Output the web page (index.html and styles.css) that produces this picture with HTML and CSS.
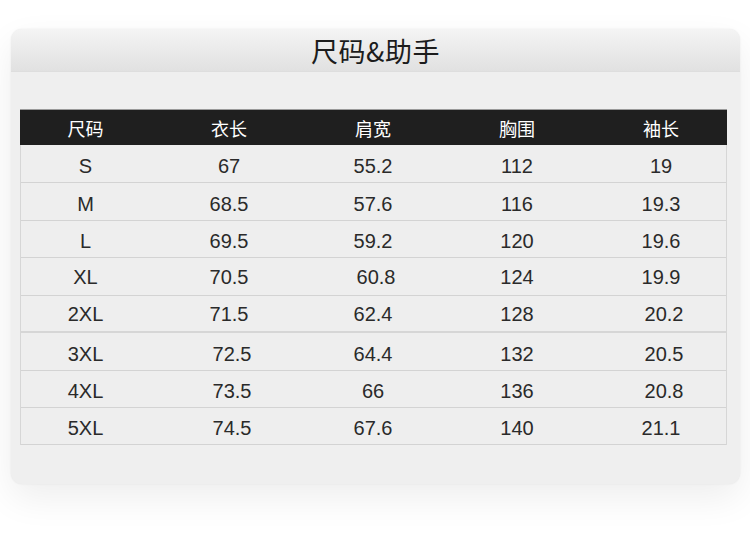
FILE: index.html
```html
<!DOCTYPE html>
<html lang="zh">
<head>
<meta charset="utf-8">
<link rel="stylesheet" href="styles.css">
</head>
<body>
<div class="card">
  <div class="card-head">尺码&amp;助手</div>
  <div class="card-body">
    <div class="table">
      <div class="row head"><span>尺码</span><span>衣长</span><span>肩宽</span><span>胸围</span><span>袖长</span></div>
      <div class="row r38"><span>S</span><span>67</span><span>55.2</span><span>112</span><span>19</span></div>
      <div class="row r38"><span>M</span><span>68.5</span><span>57.6</span><span>116</span><span>19.3</span></div>
      <div class="row r37"><span>L</span><span>69.5</span><span>59.2</span><span>120</span><span>19.6</span></div>
      <div class="row r38 high"><span>XL</span><span>70.5</span><span class="nudge">60.8</span><span>124</span><span>19.9</span></div>
      <div class="row r37 thick high"><span>2XL</span><span>71.5</span><span>62.4</span><span>128</span><span class="nudge">20.2</span></div>
      <div class="row r38"><span>3XL</span><span class="nudge">72.5</span><span>64.4</span><span>132</span><span class="nudge">20.5</span></div>
      <div class="row r37"><span>4XL</span><span class="nudge">73.5</span><span>66</span><span>136</span><span class="nudge">20.8</span></div>
      <div class="row r37"><span>5XL</span><span class="nudge">74.5</span><span>67.6</span><span>140</span><span>21.1</span></div>
    </div>
  </div>
</div>
</body>
</html>
```
FILE: styles.css
```css
* { box-sizing: border-box; }
html, body { margin: 0; padding: 0; }
body {
  width: 750px;
  height: 556px;
  background: #ffffff;
  overflow: hidden;
  padding-top: 29px;
  padding-left: 11px;
}
.card {
  width: 729px;
  height: 455px;
  border-radius: 11px;
  background: #efefef;
  box-shadow: 0 14px 36px rgba(0,0,0,0.07), 0 0 2px rgba(0,0,0,0.08);
  overflow: hidden;
  display: flex;
  flex-direction: column;
}
.card-head {
  height: 43px;
  flex: none;
  background: linear-gradient(#f4f4f4, #e1e1e1);
  border-bottom: 1px solid #dedede;
  text-align: center;
  font-family: "Noto Sans CJK SC", "Liberation Sans", sans-serif;
  font-size: 27px;
  line-height: 43px;
  color: #1c1c1c;
  letter-spacing: 0.5px;
}
.card-body {
  padding: 37px 13px 0 9px;
}
.table {
  width: 707px;
  border-left: 1px solid #d6d6d6;
  border-right: 1px solid #d6d6d6;
  font-family: "Liberation Sans", "Noto Sans CJK SC", sans-serif;
}
.row {
  display: grid;
  grid-template-columns: 129px 144px 144px 144px 144px;
  align-items: center;
  border-bottom: 1px solid #d3d3d3;
  background: #eeeeee;
  color: #2a2a2a;
  font-size: 20px;
}
.row > span { text-align: center; padding-top: 5px; }
.row > span + span { padding-left: 14px; }
.row > span.nudge { padding-left: 20px; }
.row.high > span { padding-top: 1px; }
.row.head {
  height: 36px;
  background: #1f1f1f;
  color: #ffffff;
  font-family: "Noto Sans CJK SC", sans-serif;
  font-size: 18px;
  border-bottom: none;
  border-top: 1px solid #9a9a9a;
  margin: 0 -1px;
  padding: 0 1px;
}
.row.head > span { padding-top: 0; }
.r38 { height: 38px; }
.r37 { height: 37px; }
.thick { border-bottom: 2px solid #d6d6d6; }
```
